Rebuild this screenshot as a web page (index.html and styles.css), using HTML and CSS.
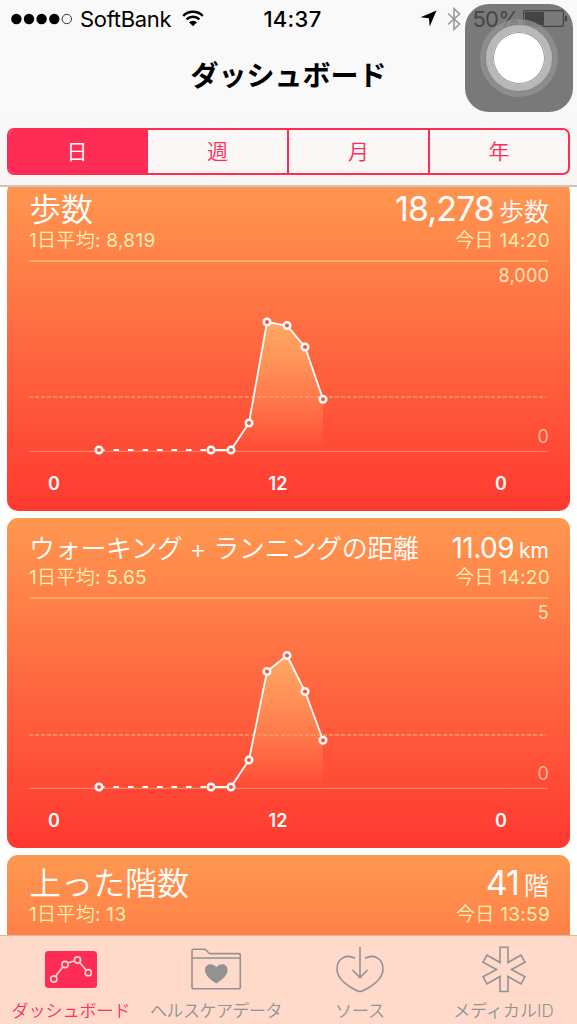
FILE: index.html
```
<!DOCTYPE html>
<html lang="ja">
<head>
  <meta charset="UTF-8" />
  <meta name="viewport" content="width=device-width, initial-scale=1.0" />
  <title>ダッシュボード</title>
  <link rel="stylesheet" href="styles.css">
</head>
<body>
  <header>
    <div class="status-bar">
      <div class="status-left">
        <svg class="signal" width="61" height="12" viewBox="0 0 61 12">
          <circle cx="5.4" cy="6" r="5.2" />
          <circle cx="18" cy="6" r="5.2" />
          <circle cx="30.6" cy="6" r="5.2" />
          <circle cx="43.3" cy="6" r="5.2" />
          <circle class="empty" cx="55.8" cy="6" r="4.7" />
        </svg>
        <span class="carrier">SoftBank</span>
        <svg class="wifi" width="22" height="17" viewBox="0 0 22 17">
          <path d="M1.2 5.8a14 14 0 0 1 19.6 0M4.6 9.4a9.2 9.2 0 0 1 12.8 0" />
          <path class="dot" d="M7 12.3a5.7 5.7 0 0 1 8 0l-4 4z" />
        </svg>
      </div>
      <div class="clock">14:37</div>
      <div class="status-right">
        <svg class="location" width="17" height="17" viewBox="0 0 17 17">
          <path d="M16.5.5L9.7 16.5 8.9 8.2.5 7.2z" />
        </svg>
        <svg class="bluetooth" width="14" height="24" viewBox="0 0 14 24">
          <path d="M1 6.5L12.6 17 7 22.3V1.7L12.6 7 1 17.5" />
        </svg>
        <span class="percent">50%</span>
        <svg class="battery" width="44" height="17" viewBox="0 0 44 17">
          <rect class="case" x=".6" y=".6" width="39.8" height="15.8" rx="2" />
          <rect x="2" y="2" width="19" height="13" />
          <path d="M41.8 5.5a3 3 0 0 1 0 6z" />
        </svg>
      </div>
    </div>
    <h1>ダッシュボード</h1>
    <nav class="segments">
      <a class="active" href="#">日</a>
      <a href="#">週</a>
      <a href="#">月</a>
      <a href="#">年</a>
    </nav>
  </header>

  <main>
    <section class="card">
      <div class="card-head">
        <h2>歩数</h2>
        <div class="value">18,278<span class="unit">歩数</span></div>
      </div>
      <div class="card-sub">
        <div><span class="num">1</span>日平均<span class="num">: 8,819</span></div>
        <div>今日<span class="num"> 14:20</span></div>
      </div>
      <svg class="chart" width="519" height="240" viewBox="0 0 519 240">
        <defs>
          <linearGradient id="area" x1="0" y1="0" x2="0" y2="1">
            <stop offset="0" stop-color="#ffa763" />
            <stop offset="1" stop-color="#ffa763" stop-opacity="0" />
          </linearGradient>
        </defs>
        <path class="rule thick" d="M0 0H519" />
        <path class="area" d="M202 189L220 162 238 61 258 65 276 86 294 138V190H202z" />
        <path class="average" d="M0 136H517" />
        <path class="base" d="M0 190.3H519" />
        <path class="gap" d="M70 189H182" />
        <path class="line" d="M182 189H202L220 162 238 61 258 64.5 276 86 294 138" />
        <g class="dots">
          <circle cx="70" cy="189" r="3.3" />
          <circle cx="182" cy="189" r="3.3" />
          <circle cx="202" cy="189" r="3.3" />
          <circle cx="220" cy="162" r="3.3" />
          <circle cx="238" cy="61" r="3.3" />
          <circle cx="258" cy="64.5" r="3.3" />
          <circle cx="276" cy="86" r="3.3" />
          <circle cx="294" cy="138.3" r="3.3" />
        </g>
        <text class="max" x="520" y="20.5">8,000</text>
        <text class="min" x="520" y="182">0</text>
        <text class="hour" x="25" y="229">0</text>
        <text class="hour" x="249" y="229">12</text>
        <text class="hour" x="472" y="229">0</text>
      </svg>
    </section>

    <section class="card compact">
      <div class="card-head">
        <h2>ウォーキング + ランニングの距離</h2>
        <div class="value">11.09<span class="unit">km</span></div>
      </div>
      <div class="card-sub">
        <div><span class="num">1</span>日平均<span class="num">: 5.65</span></div>
        <div>今日<span class="num"> 14:20</span></div>
      </div>
      <svg class="chart" width="519" height="240" viewBox="0 0 519 240">
        <path class="rule" d="M0 0H519" />
        <path class="area" d="M202 189L220 162 238 74 258 57 276 93 294 142V190H202z" />
        <path class="average" d="M0 137H517" />
        <path class="base" d="M0 190.3H519" />
        <path class="gap" d="M70 189H182" />
        <path class="line" d="M182 189H202L220 162 238 73.5 258 57.5 276 93.5 294 142" />
        <g class="dots">
          <circle cx="70" cy="189" r="3.3" />
          <circle cx="182" cy="189" r="3.3" />
          <circle cx="202" cy="189" r="3.3" />
          <circle cx="220" cy="162" r="3.3" />
          <circle cx="238" cy="73.5" r="3.3" />
          <circle cx="258" cy="57.5" r="3.3" />
          <circle cx="276" cy="93.5" r="3.3" />
          <circle cx="294" cy="142.3" r="3.3" />
        </g>
        <text class="max" x="520" y="21">5</text>
        <text class="min" x="520" y="182">0</text>
        <text class="hour" x="25" y="229">0</text>
        <text class="hour" x="249" y="229">12</text>
        <text class="hour" x="472" y="229">0</text>
      </svg>
    </section>

    <section class="card">
      <div class="card-head">
        <h2>上った階数</h2>
        <div class="value">41<span class="unit">階</span></div>
      </div>
      <div class="card-sub">
        <div><span class="num">1</span>日平均<span class="num">: 13</span></div>
        <div>今日<span class="num"> 13:59</span></div>
      </div>
    </section>
  </main>

  <footer class="tab-bar">
    <a class="tab active" href="#">
      <svg width="54" height="48" viewBox="0 0 54 48">
        <rect x="1" y="5" width="52" height="37" rx="3.5" />
        <path d="M11.6 30.3L18.9 20.7M24 17L29.8 15M35.9 16.8L42.2 24.2" />
        <circle cx="9.8" cy="33" r="3.1" />
        <circle cx="21" cy="18.5" r="3.1" />
        <circle cx="33.5" cy="14" r="3.1" />
        <circle cx="44.3" cy="26.7" r="3.1" />
      </svg>
      <span>ダッシュボード</span>
    </a>
    <a class="tab" href="#">
      <svg width="54" height="48" viewBox="0 0 54 48">
        <path d="M3 41V5q0-1.700 1.700-1.700H15q1.500 0 2.500 1.200l2 2.300q.7.800 2 .8H49.500q1.800 0 1.800 1.800V41q0 1.800-1.800 1.800H4.700Q3 42.800 3 41zM3 12H51.300" />
        <path class="solid" d="M27.300 37.500C21 33.500 16 29 16 24c0-6.500 8-7.500 11.300-2.800C30.600 16.500 38.600 17.500 38.600 24c0 5-5 9.500-11.300 13.500z" />
      </svg>
      <span class="tight">ヘルスケアデータ</span>
    </a>
    <a class="tab" href="#">
      <svg width="54" height="48" viewBox="0 0 54 48">
        <path d="M22.200 12.300C12 7 4 13.500 4 23 4 33 15.500 41 24.500 45q2.500 1.100 5 0C38.500 41 50 33 50 23 50 13.500 42 7 31.800 12.300" />
        <path d="M27 1V31M19.500 24L27 31.500 34.500 24" />
      </svg>
      <span>ソース</span>
    </a>
    <a class="tab" href="#">
      <svg width="54" height="48" viewBox="0 0 54 48">
        <path d="M23 1.300H31V16.500L44 9 48 16.200 34.500 23.500 48 30.800 44 38 31 30.500V45.500H23V30.500L10 38 6 30.800 19.500 23.500 6 16.200 10 9 23 16.500z" />
      </svg>
      <span>メディカルID</span>
    </a>
  </footer>

  <!-- AssistiveTouch -->
  <div class="assistive">
    <div class="ring"></div>
  </div>
</body>
</html>
```
FILE: styles.css
```
* {
  box-sizing: border-box;
}

body {
  margin: 0;
  height: 1024px;
  display: flex;
  flex-direction: column;
  overflow: hidden;
  font-family: Inter, 'Noto Sans CJK JP', sans-serif;
  background-color: #fff;
  color: #000;
}

a {
  text-decoration: none;
}

header {
  flex: none;
  height: 187px;
  padding: 0 7px;
  background: linear-gradient(#f9f9f9 60%, #fbf5f2);
  border-bottom: 2px solid #c9c5c3;
}

.status-bar {
  display: grid;
  grid-template-columns: 1fr auto 1fr;
  align-items: center;
  height: 37px;
  margin: 0 3px 0 4px;
  font-size: 22px;
}

.status-left,
.status-right {
  display: flex;
  align-items: center;
}

.status-right {
  justify-content: flex-end;
}

.carrier {
  margin: 0 11px 0 8px;
  letter-spacing: -0.3px;
}

.signal .empty {
  fill: none;
  stroke: #333;
  stroke-width: 1;
}

.wifi {
  fill: none;
  stroke: #000;
  stroke-width: 2.4;
}

.wifi .dot {
  fill: #000;
  stroke: none;
}

.clock {
  padding-left: 7px;
  font-weight: 500;
  letter-spacing: 0.3px;
}

.bluetooth {
  margin: 0 12px 0 10px;
  fill: none;
  stroke: #999;
  stroke-width: 1.6;
}

.percent {
  margin-right: 4px;
  letter-spacing: -0.8px;
}

.battery .case {
  fill: none;
  stroke: #000;
  stroke-width: 1.2;
}

h1 {
  margin: 19px 0 32px;
  font-size: 28px;
  line-height: 40px;
  text-align: center;
}

.segments {
  display: grid;
  grid-template-columns: 139px 139px 141px auto;
  height: 47px;
  border: 2px solid #ff2d55;
  border-radius: 7px;
  overflow: hidden;
}

.segments a {
  color: #ff2d55;
  font-size: 21px;
  font-weight: 350;
  line-height: 43px;
  text-align: center;
}

.segments a + a + a {
  border-left: 2px solid #ff2d55;
}

.segments .active {
  padding-right: 3px;
  background-color: #ff2d55;
  color: #fff;
}

main {
  flex: 1;
  min-height: 0;
  padding: 0 7px;
  overflow: hidden;
}

.card {
  height: 330px;
  margin-bottom: 7px;
  padding: 11px 21px 0 22px;
  border-radius: 11px;
  background: linear-gradient(#ff9850, #ff3830);
  color: #fff;
}

.card:first-child {
  margin-top: -6px;
}

.card-head {
  display: flex;
  align-items: baseline;
  height: 36px;
  font-size: 34px;
  line-height: 34px;
  white-space: nowrap;
}

.card-head::before {
  content: '\200b';
}

.card-head h2 {
  flex: 1;
  margin: 0;
  font-size: 32px;
  font-weight: 350;
}

.value {
  letter-spacing: -0.9px;
}

.unit {
  margin-left: 5px;
  font-size: 25px;
  font-weight: 350;
  letter-spacing: 0;
}

.compact h2 {
  font-size: 26px;
  letter-spacing: -0.3px;
}

.compact .value {
  font-size: 28px;
  letter-spacing: -0.5px;
}

.compact .unit {
  font-size: 21px;
  font-weight: 400;
  letter-spacing: 0;
}

.card-sub {
  display: flex;
  justify-content: space-between;
  height: 33px;
  margin-right: -1px;
  color: #ffefb0;
  font-size: 19px;
  font-weight: 350;
  letter-spacing: 0.3px;
  line-height: 25px;
  white-space: pre;
}

.num {
  font-weight: 400;
}

.chart {
  display: block;
  overflow: visible;
}

.chart path {
  fill: none;
}

.chart .rule {
  stroke: #ffd07a;
}

.chart .thick {
  stroke: #ffb060;
  stroke-width: 2;
}

.chart .area {
  fill: url(#area);
}

.chart .average {
  stroke: #ff9c70;
  stroke-width: 1.3;
  stroke-dasharray: 4 2;
}

.chart .base {
  stroke: #ff8c6c;
}

.chart .gap {
  stroke: #fff;
  stroke-width: 2;
  stroke-dasharray: 5.5 9;
}

.chart .line {
  stroke: #fff;
  stroke-width: 1.8;
}

.dots {
  fill: #ff4f38;
  stroke: #fff;
  stroke-width: 2.5;
}

.chart text {
  fill: #ffe6b8;
  font-size: 18px;
  letter-spacing: 0.2px;
  text-anchor: end;
}

.chart .min {
  fill: #ffb59c;
}

.chart .hour {
  fill: #fff;
  font-weight: 600;
  text-anchor: middle;
}

.tab-bar {
  flex: none;
  display: grid;
  grid-template-columns: 142px 148px 140px auto;
  height: 89px;
  background-color: #ffdacb;
  border-top: 1px solid #d5bb9e;
}

.tab {
  display: flex;
  flex-direction: column;
  align-items: center;
  padding-top: 10px;
  color: #929292;
  font-size: 17px;
  font-weight: 350;
  line-height: 34px;
  white-space: nowrap;
}

.tab svg {
  fill: none;
  stroke: #929292;
  stroke-width: 1.6;
}

.tab .solid {
  fill: #929292;
  stroke: none;
}

.tab .tight {
  letter-spacing: -0.5px;
}

.tab.active {
  color: #ff2d55;
}

.tab.active svg {
  stroke: #ffdacb;
}

.tab.active rect {
  fill: #ff2d55;
  stroke: none;
}

.assistive {
  position: absolute;
  top: 4px;
  right: 4px;
  width: 108px;
  height: 108px;
  display: flex;
  align-items: center;
  justify-content: center;
  border-radius: 24px;
  background-color: rgba(86, 86, 86, 0.79);
}

.ring {
  width: 66px;
  height: 66px;
  border: 7px solid #b8b8b8;
  border-radius: 50%;
  background-color: #fff;
  box-shadow: 0 0 0 1px #888, 0 0 0 6px rgba(150, 150, 150, 0.7), inset 0 0 0 1px #999;
}
```
